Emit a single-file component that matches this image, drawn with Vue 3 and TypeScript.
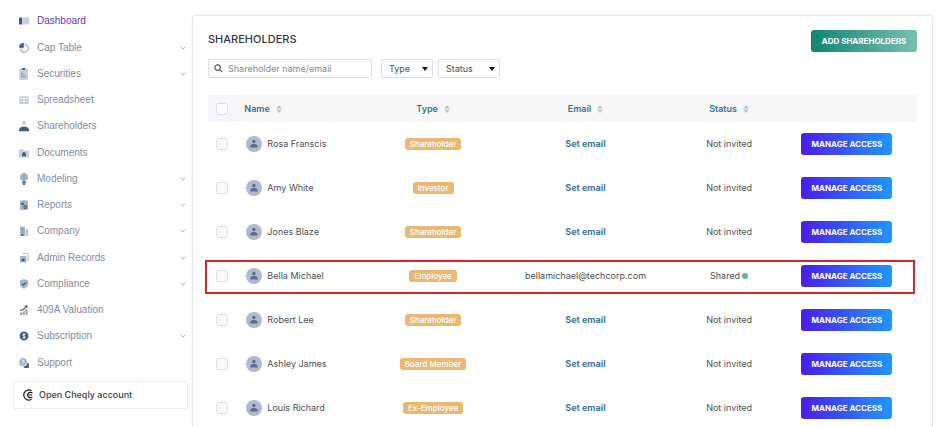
<script setup lang="ts">
import { ref } from 'vue'

interface NavItem {
  label: string
  icon: string
  expandable?: boolean
}

interface Shareholder {
  name: string
  type: string
  email?: string
  shared?: boolean
}

const navGroups: NavItem[][] = [
  [{ label: 'Dashboard', icon: 'dashboard' }],
  [
    { label: 'Cap Table', icon: 'pie', expandable: true },
    { label: 'Securities', icon: 'clipboard', expandable: true },
    { label: 'Spreadsheet', icon: 'sheet' },
    { label: 'Shareholders', icon: 'person' },
  ],
  [
    { label: 'Documents', icon: 'folder' },
    { label: 'Modeling', icon: 'bulb', expandable: true },
    { label: 'Reports', icon: 'report', expandable: true },
    { label: 'Company', icon: 'building', expandable: true },
  ],
  [
    { label: 'Admin Records', icon: 'records', expandable: true },
    { label: 'Compliance', icon: 'shield', expandable: true },
    { label: '409A Valuation', icon: 'growth' },
    { label: 'Subscription', icon: 'dollar', expandable: true },
  ],
  [{ label: 'Support', icon: 'chat' }],
]

const columns: string[] = ['Name', 'Type', 'Email', 'Status']

const shareholders: Shareholder[] = [
  { name: 'Rosa Franscis', type: 'Shareholder' },
  { name: 'Amy White', type: 'Investor' },
  { name: 'Jones Blaze', type: 'Shareholder' },
  { name: 'Bella Michael', type: 'Employee', email: 'bellamichael@techcorp.com', shared: true },
  { name: 'Robert Lee', type: 'Shareholder' },
  { name: 'Ashley James', type: 'Board Member' },
  { name: 'Louis Richard', type: 'Ex-Employee' },
]

const active = ref('Dashboard')
const query = ref('')
</script>

<template>
  <div class="shell">
    <aside class="sidebar">
      <nav class="nav" aria-label="Main">
        <ul v-for="(group, g) in navGroups" :key="g" class="group">
          <li v-for="item in group" :key="item.label">
            <a href="#" class="link" :class="{ active: item.label === active }" @click.prevent="active = item.label">
              <svg class="icon" viewBox="0 0 12 12" aria-hidden="true">
                <g v-if="item.icon === 'dashboard'">
                  <rect x="1" y="2.5" width="3.2" height="7" rx=".6" class="dark" />
                  <rect x="4.2" y="2.5" width="7" height="7" rx=".6" class="pale" />
                </g>
                <g v-else-if="item.icon === 'pie'">
                  <path d="M6.4 6.2V1a5.1 5.1 0 1 1-5.2 5.6h2.2L6.4 6.2z" class="pale" />
                  <path d="M6.4 3.6a2.6 2.6 0 1 1-2.4 3.4l2.4-.8z" class="white" />
                  <path d="M5.8.8v5H.9A5 5 0 0 1 5.8.8z" class="dark" />
                </g>
                <g v-else-if="item.icon === 'clipboard'">
                  <rect x="1.2" y=".8" width="8.8" height="11.2" rx="1" class="pale" />
                  <rect x="3.9" y="0" width="3.4" height="1.8" rx=".6" class="dark" />
                  <path d="M3 5.2h2.2M3 7h3.6M3 8.8h5" class="line" />
                </g>
                <g v-else-if="item.icon === 'sheet'">
                  <rect x="1.2" y="2.2" width="9.6" height="7.8" rx="1" class="pale" />
                  <path d="M2.2 4.4h7.6M2.2 7.1h7.6M6 4.4v4.8" class="white-line" />
                  <path d="M3 5.8h2M7 5.8h2M3 8.4h2M7 8.4h2" class="soft-line" />
                </g>
                <g v-else-if="item.icon === 'person'">
                  <circle cx="6" cy="3" r="2.2" class="pale" />
                  <path d="M.8 11.2c0-3 2-4.6 5.2-4.6s5.2 1.6 5.2 4.6z" class="dark" />
                </g>
                <g v-else-if="item.icon === 'folder'">
                  <path d="M1 2.2h3.8L6 3.4h5v7H1z" class="pale" />
                  <path d="M4.6 6.4a1.4 1.4 0 0 1 2.8 0V7H8v2.2H4V7h.6z" class="dark" />
                </g>
                <g v-else-if="item.icon === 'bulb'">
                  <path d="M6 0a4.2 4.2 0 0 0-2.4 7.6L4.4 9h3.2l.8-1.4A4.2 4.2 0 0 0 6 0z" class="mid" />
                  <path d="M7.3 2.5c-2-1-3 .9-1.2 1.4s1 2.4-1.3 1.3" class="line" />
                  <rect x="4.3" y="8.6" width="3.4" height="1.8" class="dark" />
                  <rect x="5" y="10.4" width="2" height="1.6" class="dark" />
                </g>
                <g v-else-if="item.icon === 'report'">
                  <path d="M2 1.6h2.4L6 .8l1.6.8H10V11H2z" class="mid" />
                  <circle cx="4.6" cy="4.8" r="1.4" class="dark" />
                  <circle cx="7.2" cy="8" r="1.9" class="dark" />
                  <circle cx="7.2" cy="8" r=".6" class="white" />
                </g>
                <g v-else-if="item.icon === 'building'">
                  <path d="M2 1.6h5V11H2z" class="mid" />
                  <path d="M7.4 4h2.8v7H7.4z" class="pale" />
                  <path d="M3.4 3.6h2.2M3.4 5.4h2.2M3.4 7.2h2.2M8.4 6h1M8.4 8h1" class="line" />
                  <path d="M3.6 9h1.8v2H3.6z" class="dark" />
                </g>
                <g v-else-if="item.icon === 'records'">
                  <path d="M4.8 1.5h4.1l1.3 1.4v5H8.8" class="outline" />
                  <rect x="2" y="4" width="6.4" height="6.6" rx=".8" class="mid" />
                  <path d="M3.4 9.2V6.8l1 .7 1.4-1.5.8 1v2.2z" class="dark" />
                </g>
                <g v-else-if="item.icon === 'shield'">
                  <path d="M6 1l4.2 1.4v3.2c0 2.6-1.8 4.4-4.2 5.4-2.4-1-4.2-2.8-4.2-5.4V2.4z" class="mid" />
                  <path d="M4 5.6l1.5 1.5L8.2 4.4" class="check" />
                </g>
                <g v-else-if="item.icon === 'growth'">
                  <path d="M2 8.4h2V11H2zM4.8 7.2h2V11h-2zM7.6 5.2h2V11h-2z" class="gray" />
                  <path d="M2 6.4c2.6-.1 4.5-1.5 6.4-3.8M6.6 2.2l2.4-.6v2.2" class="gray-line" />
                </g>
                <g v-else-if="item.icon === 'dollar'">
                  <circle cx="6" cy="6" r="4.9" class="pale" />
                  <circle cx="6" cy="6" r="4.2" class="dark" />
                  <path d="M7.5 4.5C6.2 3.4 4.5 4 4.7 5.1 5 6.4 7.3 5.6 7.4 7c0 1.2-1.8 1.4-3 .5M6 3v6" class="white-line" />
                </g>
                <g v-else>
                  <path d="M5 1a4 4 0 1 1-1.7 7.6L1 9l.8-1.8A4 4 0 0 1 5 1z" class="mid" />
                  <path d="M4.2 3.8c.4-1 2-.8 1.8.3C5.9 4.8 5 4.7 5 5.7M5 6.5v.6" class="white-line" />
                  <path d="M9.6 5.2c1.6 1.2 1.7 3 1 4.2l.6 1.8-1.9-.4c-2 .7-3.4 0-4.2-1.3 2.5 0 4.4-1.4 4.5-4.3z" class="dark" />
                </g>
              </svg>
              <span class="label">{{ item.label }}</span>
              <svg v-if="item.expandable" class="chevron" viewBox="0 0 6 4" aria-hidden="true">
                <path d="M.7.8L3 3 5.3.8" />
              </svg>
            </a>
          </li>
        </ul>
      </nav>
      <a href="#" class="account" @click.prevent>
        <svg class="logo" viewBox="0 0 12 12" aria-hidden="true">
          <path d="M9.6 1.8A5 5 0 1 0 9.6 10.2" />
          <path d="M10.4 4.2A2.7 2.7 0 1 0 10.4 7.8M6.6 6h3.4" />
        </svg>
        Open Cheqly account
      </a>
    </aside>

    <main class="card">
      <header class="top">
        <h1>SHAREHOLDERS</h1>
        <button type="button" class="btn add">ADD SHAREHOLDERS</button>
      </header>

      <form class="filters" @submit.prevent>
        <label class="search">
          <svg viewBox="0 0 10 10" aria-hidden="true">
            <circle cx="4" cy="4" r="3" />
            <path d="M6.3 6.3L9 9" />
          </svg>
          <input v-model="query" type="text" aria-label="Search shareholders" placeholder="Shareholder name/email" />
        </label>
        <label class="pick">
          <select aria-label="Type"><option>Type</option></select>
          <svg viewBox="0 0 6 4" aria-hidden="true"><path d="M0 0h6L3 4z" /></svg>
        </label>
        <label class="pick wide">
          <select aria-label="Status"><option>Status</option></select>
          <svg viewBox="0 0 6 4" aria-hidden="true"><path d="M0 0h6L3 4z" /></svg>
        </label>
      </form>

      <table>
        <colgroup>
          <col class="c-check" />
          <col class="c-name" />
          <col class="c-mid" />
          <col class="c-mid" />
          <col class="c-status" />
          <col class="c-action" />
        </colgroup>
        <thead>
          <tr>
            <th class="tick"><input type="checkbox" aria-label="Select all" /></th>
            <th v-for="col in columns" :key="col" :class="{ first: col === 'Name' }">
              <span class="sort">
                {{ col }}
                <svg viewBox="0 0 6 8" aria-hidden="true"><path d="M0 3.4L3 0l3 3.4zM0 4.6h6L3 8z" /></svg>
              </span>
            </th>
            <th></th>
          </tr>
        </thead>
        <tbody>
          <tr v-for="s in shareholders" :key="s.name" :class="{ highlighted: s.shared }">
            <td class="tick"><input type="checkbox" :aria-label="'Select ' + s.name" /></td>
            <td>
              <div class="person">
                <svg viewBox="0 0 16 16" aria-hidden="true">
                  <circle cx="8" cy="8" r="8" class="disc" />
                  <circle cx="8" cy="5.4" r="1.7" class="figure" />
                  <path d="M4.2 11.4c0-2.4 1.4-3.6 3.8-3.6s3.8 1.2 3.8 3.6z" class="figure" />
                </svg>
                {{ s.name }}
              </div>
            </td>
            <td class="center"><span class="badge">{{ s.type }}</span></td>
            <td class="center">
              <template v-if="s.email">{{ s.email }}</template>
              <a v-else href="#" class="set" @click.prevent>Set email</a>
            </td>
            <td class="center">
              <span v-if="s.shared" class="shared">Shared<i class="dot"></i></span>
              <template v-else>Not invited</template>
            </td>
            <td class="action"><button type="button" class="btn manage">MANAGE ACCESS</button></td>
          </tr>
        </tbody>
      </table>
    </main>
  </div>
</template>

<style>
body {
  margin: 0;
  background: #fff;
}
</style>

<style scoped>
.shell,
.shell * {
  box-sizing: border-box;
}
.shell {
  display: flex;
  height: 100vh;
  overflow: hidden;
  font-family: Inter, 'Liberation Sans', sans-serif;
  font-size: 9px;
  line-height: 12px;
  color: #4b4f56;
}
a {
  text-decoration: none;
}

/* Sidebar */
.sidebar {
  flex: 0 0 192px;
  padding: 8px 4px 0 13px;
}
.nav {
  display: flex;
  flex-direction: column;
  gap: 1px;
}
.group {
  margin: 0;
  padding: 0;
  list-style: none;
}
.link {
  display: flex;
  align-items: center;
  gap: 7px;
  height: 26px;
  padding: 0 2px 0 5px;
  color: #7f8ba3;
  font-family: 'Liberation Sans', Arial, sans-serif;
  font-size: 10px;
}
.link.active {
  color: #6633c4;
}
.label {
  flex: 1;
}
.icon {
  width: 12px;
  height: 12px;
}
.chevron {
  width: 6px;
  height: 4px;
  fill: none;
  stroke: #a9b0bf;
}
.dark { fill: #47587f; }
.mid { fill: #aab4c8; }
.pale { fill: #c8cedb; }
.white { fill: #fff; }
.gray { fill: #a2a2a6; }
.line, .soft-line, .check, .outline, .white-line, .gray-line { fill: none; stroke-width: .8; }
.line { stroke: #7c89a5; }
.soft-line { stroke: #aab4c8; }
.check { stroke: #3c4d76; stroke-width: 1.2; }
.outline { stroke: #aab4c8; stroke-width: 1; }
.white-line { stroke: #fff; }
.gray-line { stroke: #66666a; stroke-width: 1.1; }

.account {
  display: flex;
  align-items: center;
  gap: 5px;
  height: 28px;
  margin-top: 5px;
  padding: 0 8px;
  border: 1px solid #ececf0;
  border-radius: 2px;
  color: #3c3f45;
  font-size: 9px;
  font-weight: 500;
}
.logo {
  width: 12px;
  height: 12px;
  fill: none;
  stroke: #1d1f23;
  stroke-width: 1.2;
}

/* Card */
.card {
  flex: 1;
  min-width: 0;
  height: max-content;
  min-height: 100vh;
  margin: 15px 6px 0 0;
  padding: 14px 15px;
  border: 1px solid #e6e7e9;
  border-radius: 3px;
  box-shadow: 0 0 2px #e8e9eb;
}
.top {
  display: flex;
  justify-content: space-between;
  height: 22px;
}
h1 {
  margin: 2px 0 0;
  font-size: 11px;
  line-height: 14px;
  font-weight: 500;
  color: #33373d;
}
.btn {
  height: 22px;
  padding: 0;
  border: 0;
  border-radius: 3px;
  color: #fff;
  font-family: inherit;
  font-size: 8px;
  font-weight: 700;
  cursor: pointer;
}
.add {
  width: 106px;
  background: linear-gradient(90deg, #11856f, #78c0b2);
}
.manage {
  display: block;
  width: 91px;
  background: linear-gradient(90deg, #4a1de6, #1f97ff);
}
.filters {
  display: flex;
  gap: 5px;
  margin: 7px 0 17px;
}
.search,
.pick {
  display: flex;
  align-items: center;
  height: 19px;
  border: 1px solid #dcdee2;
  border-radius: 2px;
}
.search {
  gap: 5px;
  width: 164px;
  margin-right: 4px;
  padding: 0 5px;
}
.search svg {
  flex: none;
  width: 9px;
  height: 9px;
  fill: none;
  stroke: #55585e;
  stroke-width: 1.3;
}
.search input,
.pick select {
  flex: 1;
  min-width: 0;
  height: 100%;
  padding: 0;
  border: 0;
  outline: 0;
  background: none;
  color: #4b4f56;
  font-family: inherit;
  font-size: 9px;
  appearance: none;
}
.search input::placeholder {
  color: #85888e;
}
.pick {
  width: 52px;
  padding: 0 4px 0 7px;
}
.pick.wide {
  width: 62px;
}
.pick svg {
  flex: none;
  width: 6px;
  height: 4px;
  fill: #111;
}

/* Table */
table {
  width: 100%;
  table-layout: fixed;
  border-collapse: collapse;
}
.c-check { width: 4%; }
.c-name { width: 17%; }
.c-mid { width: 21.5%; }
.c-status { width: 19%; }
.c-action { width: 17%; }
th,
td {
  padding: 0;
}
th {
  height: 27px;
  background: #f7f7f8;
  color: #41708f;
  font-weight: 600;
}
th.first {
  padding-left: 8px;
  text-align: left;
}
th.tick {
  background: #f4f6fb;
}
.sort {
  display: inline-flex;
  align-items: center;
  gap: 6px;
}
.sort svg {
  width: 6px;
  height: 8px;
  fill: #c3c7ce;
}
td {
  height: 44px;
}
.tick {
  text-align: center;
}
.tick input {
  display: block;
  width: 12px;
  height: 12px;
  margin: 0 auto;
  border: 1px solid #dfe1e7;
  border-radius: 3px;
  background: #f8f8f9;
  appearance: none;
}
th.tick input {
  background: #fff;
}
.person {
  display: flex;
  align-items: center;
  gap: 5px;
  padding-left: 10px;
}
.person svg {
  width: 16px;
  height: 16px;
}
.disc { fill: #b1bacb; }
.figure { fill: #5c6c90; }
.center {
  text-align: center;
}
.badge {
  display: inline-block;
  padding: 0 5px;
  border-radius: 3px;
  background: #e9b872;
  color: #fff;
  font-size: 8px;
  font-weight: 500;
}
.set {
  color: #41779c;
  font-weight: 700;
}
.shared {
  display: inline-flex;
  align-items: center;
  gap: 2px;
}
.dot {
  width: 6px;
  height: 6px;
  border-radius: 50%;
  background: #58b5a3;
}
.action {
  padding-left: 5px;
}
.highlighted {
  position: relative;
}
.highlighted::after {
  content: '';
  position: absolute;
  inset: 6px 2px 4px -3px;
  border: 2px solid #d9232e;
  pointer-events: none;
}
</style>
